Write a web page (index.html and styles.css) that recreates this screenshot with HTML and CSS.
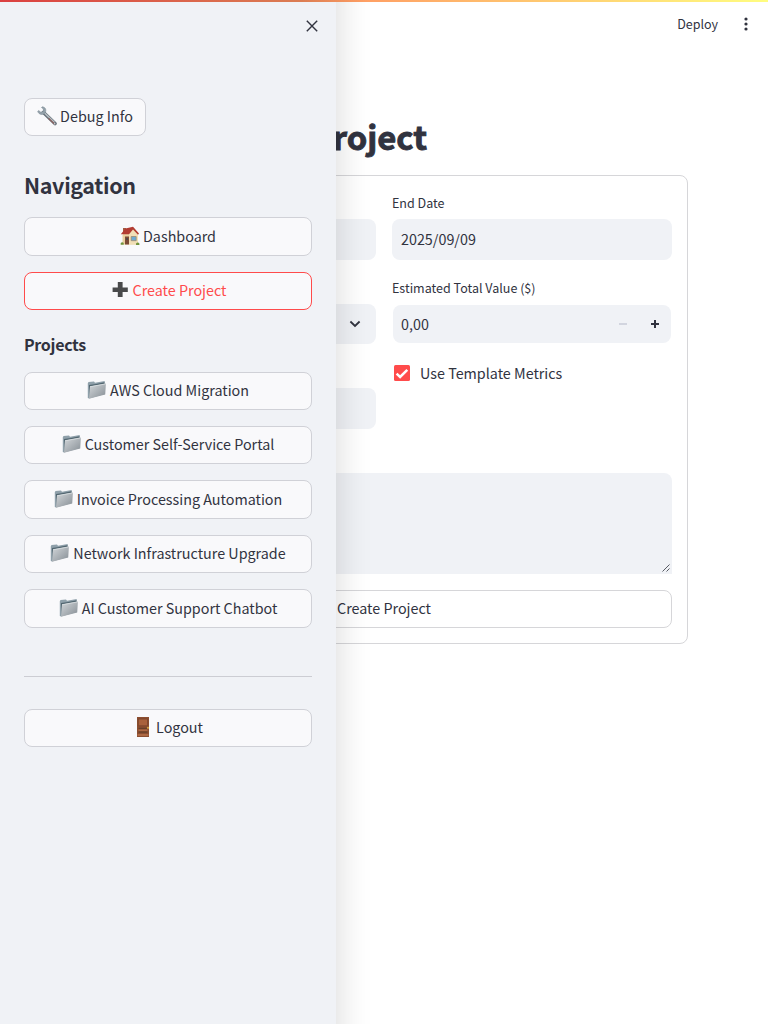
FILE: index.html
```html
<!DOCTYPE html>
<html lang="en">
<head>
<meta charset="utf-8">
<title>Create Project</title>
<link rel="stylesheet" href="styles.css">
</head>
<body>
<svg class="defs" aria-hidden="true">
  <defs>
    <linearGradient id="metal" x1="0" y1="0" x2="1" y2="1"><stop offset="0" stop-color="#d3d7da"/><stop offset="1" stop-color="#858d94"/></linearGradient>
    <symbol id="folder" viewBox="0 0 20 20">
      <path d="M.8 3.2 1.5 2 7 1.5 8 2.8 17.7 1 18 14 2 18.5.8 18Z" fill="#8fa0aa"/>
      <path d="M2 5 9 4 17.5 2.2V4L3 6.5 2 18Z" fill="#526670"/>
      <path d="M3 6.5 18.9 3.6 18.2 14.4 2 18.8Z" fill="url(#metal)"/>
      <path d="M3 6.7 18.7 3.9" stroke="#e4e8ea" stroke-width=".7"/>
    </symbol>
  </defs>
</svg>
<div class="decoration"></div>
<aside class="sidebar">
  <div class="sidebar-head"><svg class="close" viewBox="0 0 12 12"><path d="M.8.8 11.2 11.2M11.2.8.8 11.2"/></svg></div>
  <button class="btn debug"><svg class="emoji" viewBox="0 0 20 20">
    <path d="M6.5 6.5 18 17.5" stroke="#67717a" stroke-width="3.6" stroke-linecap="round"/>
    <path d="M6.5 6 17.5 16.5" stroke="#b9c0c5" stroke-width="1.5"/>
    <path d="M11.5 12.2 17.5 18" stroke="#8b6260" stroke-width="1.2"/>
    <path d="M5.2.8C8.5 1 9.7 4 8.2 6.6 6.5 9.4 2.2 9.3.7 5.5L1.6 4.5 3.8 6.2 6.3 5.2 6.4 3 4.5 1.5Z" fill="#94a1aa" stroke="#71808a" stroke-width=".5"/>
    <circle cx="17.7" cy="17.7" r=".7" fill="#ddd"/></svg><span>Debug Info</span></button>
  <h2 class="nav-title">Navigation</h2>
  <div class="stack">
    <button class="btn"><svg class="emoji" viewBox="0 0 20 20">
      <path d="M3 2h3v5H3z" fill="#a35c43"/>
      <path d="M2.5 9 6 4 14 2 18 8V18.5H2.5Z" fill="#e9cfa0"/>
      <path d="M9 8 13.5 2.5 18 8V18.5H9Z" fill="#f2dfb7"/>
      <path d="M5.5 2.5 13 .8 19 7.5 18 8.8 13 3.5 9 8.3H.8Z" fill="#b23b32"/>
      <path d="M5 10.5h4v8H5z" fill="#7c4a36"/><path d="M6 12h2v2H6z" fill="#4f4646"/>
      <path d="M11.2 10.5h5v4.2h-5z" fill="#6daad4" stroke="#9a8267" stroke-width=".7"/>
      <path d="M.7 17q1.5-1.5 3 0v1.8h-3zM16 17.5q2-2 3.4 0v1.4H16z" fill="#71943d"/></svg><span>Dashboard</span></button>
    <button class="btn active"><svg class="emoji plus" viewBox="0 0 20 20"><path d="M8.8 2.1h4.8v5.3h5.2v4.5h-5.2v5.2H8.8v-5.2H3.6V7.4h5.2z" fill="#494a4b"/></svg><span>Create Project</span></button>
  </div>
  <h3 class="projects-title">Projects</h3>
  <div class="stack">
    <button class="btn"><svg class="emoji"><use href="#folder"/></svg><span>AWS Cloud Migration</span></button>
    <button class="btn"><svg class="emoji"><use href="#folder"/></svg><span>Customer Self-Service Portal</span></button>
    <button class="btn"><svg class="emoji"><use href="#folder"/></svg><span>Invoice Processing Automation</span></button>
    <button class="btn"><svg class="emoji"><use href="#folder"/></svg><span>Network Infrastructure Upgrade</span></button>
    <button class="btn"><svg class="emoji"><use href="#folder"/></svg><span>AI Customer Support Chatbot</span></button>
  </div>
  <hr>
  <button class="btn"><svg class="emoji" viewBox="0 0 20 20"><path d="M4 0h12v20H4z" fill="#8c4e30"/><path d="M5.3 2h9.3v6.8H5.3z" fill="#a9613c" stroke="#74402a" stroke-width=".7"/><path d="M5.5 10.7h9v1.4h-9zM5.5 14.5h9v1.3h-9z" fill="#67402a"/><path d="M5.5 12.5h9v1.6h-9zM4.5 17h11v2h-11z" fill="#ae6843"/><circle cx="15" cy="10.8" r="1.1" fill="#d5a544"/></svg><span>Logout</span></button>
</aside>
<header class="toolbar"><span>Deploy</span><svg class="menu" viewBox="0 0 4 14"><circle cx="2" cy="2" r="1.6"/><circle cx="2" cy="7" r="1.6"/><circle cx="2" cy="12" r="1.6"/></svg></header>
<main class="main">
  <h1>Project</h1>
  <form class="card">
    <div class="columns">
      <div class="left">
        <div class="field"></div>
        <div class="field select"><svg viewBox="0 0 12 8"><path d="m1.4 1.5 4.6 4.4 4.6-4.4"/></svg></div>
        <div class="field"></div>
      </div>
      <div class="right">
        <label>End Date</label>
        <div class="field date">2025/09/09</div>
        <label class="value-label">Estimated Total Value ($)</label>
        <div class="field number"><span>0,00</span><svg viewBox="0 0 8 8"><path d="M0 4h8" stroke="#d2d5df"/></svg><svg viewBox="0 0 8 8"><path d="M0 4h8M4 0v8" stroke="#31333f"/></svg></div>
        <div class="check"><svg viewBox="0 0 16 16"><rect width="16" height="16" rx="1.5" fill="#ff4b4b"/><path d="m2.6 8.6 3.5 3.3 7.2-7.1" fill="none" stroke="#fff" stroke-width="2.5"/></svg><span>Use Template Metrics</span></div>
      </div>
    </div>
    <div class="area"><svg viewBox="0 0 8 8"><path d="M.5 7.5l7-7M4.5 7.5l3-3"/></svg></div>
    <button class="btn submit" type="button"><span>Create Project</span></button>
  </form>
</main>
</body>
</html>
```
FILE: styles.css
```css
* { box-sizing: border-box; }
body {
  margin: 0;
  position: relative;
  height: 1024px;
  overflow: hidden;
  background: #fff;
  color: #31333f;
  font: 14.34px/24px "Noto Sans CJK SC", "Noto Sans CJK JP", sans-serif;
}
h1, h2, h3 { margin: 0; font-weight: 700; }
.defs { position: absolute; width: 0; height: 0; }
.decoration {
  position: absolute;
  inset: 0 0 auto;
  height: 2px;
  z-index: 3;
  background: linear-gradient(90deg, rgba(0,0,0,.14) 0 300px, transparent 368px), linear-gradient(90deg, #ff4b4b, #fffd80);
}
.sidebar {
  position: absolute;
  z-index: 2;
  top: -40px;
  left: 0;
  width: 336px;
  height: 1104px;
  padding: 40px 24px 0;
  background: #f0f2f6;
  box-shadow: 0 0 34px rgba(0,0,0,.16);
}
.sidebar-head { height: 98px; display: flex; justify-content: flex-end; padding: 20px 0 0; margin-right: -6px; }
.close { width: 12px; height: 12px; fill: none; stroke: #31333f; stroke-width: 1.4; }
.btn {
  display: flex;
  align-items: center;
  justify-content: center;
  gap: 3px;
  width: 100%;
  height: 38.4px;
  padding: 0 12px 1.6px;
  border: 1px solid #d0d1d7;
  border-radius: 8px;
  background: #f9f9fb;
  color: #31333f;
  font: inherit;
  white-space: nowrap;
}
.emoji { width: 20px; height: 20px; flex: none; fill: none; }
.debug { width: 122px; }
.active { border-color: #ff4b4b; color: #ff4b4b; }
.nav-title { font-size: 21.5px; letter-spacing: -.35px; line-height: 30px; margin: 34px 0 17px; }
.projects-title { font-size: 16px; letter-spacing: -.3px; line-height: 24px; margin: 22px 0 15.45px; }
.stack { display: grid; gap: 16px; }
hr { border: 0; height: 1px; background: #cccdd3; margin: 48.15px 0 32px; }
.toolbar { display: flex; justify-content: flex-end; align-items: center; gap: 26px; height: 48px; padding-right: 20px; font-size: 12.5px; }
.menu { width: 4px; height: 14px; fill: #31333f; }
.main { padding: 62px 80px 0; }
h1 { width: 347px; font-size: 32.8px; line-height: 52px; height: 65px; text-align: right; white-space: nowrap; -webkit-text-stroke: .9px #31333f; }
.card { height: 469px; border: 1px solid #d6d6d9; border-radius: 8px; padding: 15px; }
.columns { display: grid; grid-template-columns: 1fr 1fr; gap: 16px; height: 282px; }
.field { height: 41px; border-radius: 8px; background: #f0f2f6; padding: 0 9px; display: flex; align-items: center; }
.date { padding-bottom: 2px; }
.left { padding-top: 28px; display: grid; align-content: start; gap: 44px; }
.select { justify-content: flex-end; padding-right: 15px; height: 40px; }
.select svg { width: 12px; height: 8px; fill: none; stroke: #31333f; stroke-width: 1.8; }
label { display: block; font-size: 12.53px; line-height: 24px; height: 28px; }
.value-label { margin-top: 16px; height: 29px; }
.number { height: 38px; margin: 0 1px; padding: 0 12px 0 8px; gap: 24px; }
.number span { flex: 1; }
.number svg { width: 8px; height: 8px; stroke-width: 2; }
.check { display: flex; align-items: center; gap: 10px; height: 24px; margin: 18px 0 0 2px; }
.check svg { width: 16px; height: 16px; }
.area { height: 101px; border-radius: 8px 8px 0 8px; background: #f0f2f6; display: flex; justify-content: flex-end; align-items: flex-end; padding: 2px; }
.area svg { width: 8px; height: 8px; stroke: #31333f; stroke-width: .8; }
.submit { margin-top: 16px; background: #fff; border-color: #d6d6d9; }
```
